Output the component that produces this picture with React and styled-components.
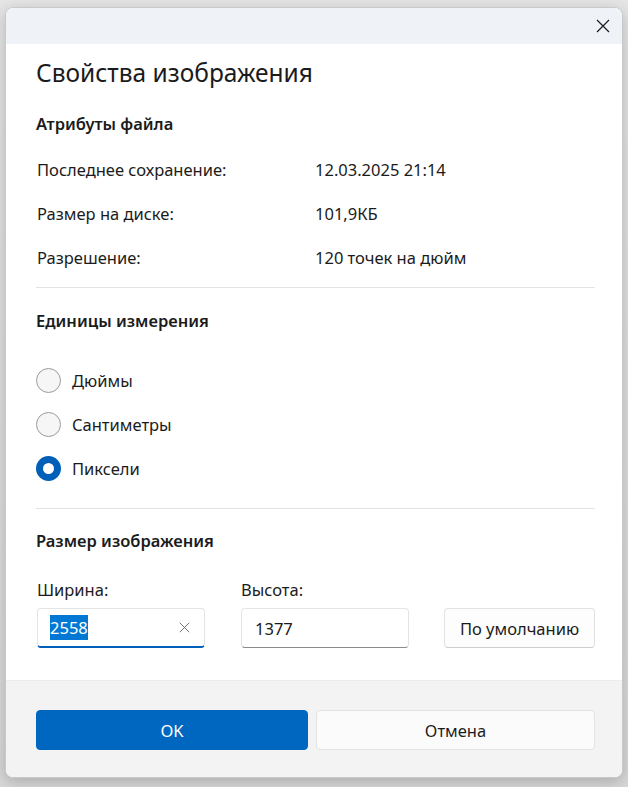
import React from "react";
import styled, { createGlobalStyle } from "styled-components";

const Global = createGlobalStyle`
  html, body { margin: 0; padding: 0; }
  body {
    background: linear-gradient(#e6e6e6, #d9d9d9);
    font-family: "Noto Sans", "Open Sans", sans-serif;
    color: #1b1b1b;
    width: 628px;
    height: 787px;
    overflow: hidden;
  }
`;

const Dialog = styled.div`
  margin: 7px 0 0 5px;
  width: 618px;
  height: 771px;
  box-sizing: border-box;
  border: 1px solid #c9c9c9;
  border-radius: 8px;
  overflow: hidden;
  display: flex;
  flex-direction: column;
  box-shadow: 0 4px 16px rgba(0,0,0,0.22);
  background: #fff;
`;

const TitleBar = styled.div`
  height: 36px;
  background: #eff2f6;
  display: flex;
  justify-content: flex-end;
  align-items: center;
  padding-right: 11px;
`;

const CloseBtn = styled.div`
  width: 16px;
  height: 16px;
  display: flex;
  align-items: center;
  justify-content: center;
`;

const Body = styled.div`
  flex: 1;
  padding: 11px 27px 0 30px;
  display: flex;
  flex-direction: column;
`;

const Title = styled.h1`
  margin: 0;
  font-size: 24.5px;
  font-weight: 400;
  line-height: 36px;
  height: 36px;
`;

const SectionHeading = styled.h2`
  margin: ${p => p.$mt}px 0 0 0;
  font-size: 16.5px;
  font-weight: 600;
  line-height: 24px;
  height: 24px;
`;

const InfoRows = styled.div`
  margin-top: 11px;
  display: flex;
  flex-direction: column;
`;

const InfoRow = styled.div`
  height: 44px;
  display: grid;
  grid-template-columns: 278px 1fr;
  align-items: center;
  font-size: 16.5px;
  padding-left: 1px;
`;

const Divider = styled.div`
  height: 1px;
  background: #e3e3e3;
  margin-top: ${p => p.$mt}px;
`;

const RadioGroup = styled.div`
  margin-top: 25px;
  display: flex;
  flex-direction: column;
`;

const RadioRow = styled.label`
  height: 44px;
  display: flex;
  align-items: center;
  gap: 11px;
  font-size: 16.5px;
`;

const RadioCircle = styled.span`
  width: 25px;
  height: 25px;
  box-sizing: border-box;
  border-radius: 50%;
  flex: none;
  background: ${p => (p.$checked ? "#fff" : "#f6f6f6")};
  border: ${p => (p.$checked ? "7px solid #005fb8" : "1px solid #9b9b9b")};
`;

const FieldRow = styled.div`
  margin-top: 25px;
  display: flex;
  align-items: flex-end;
`;

const Field = styled.div`
  display: flex;
  flex-direction: column;
  width: 168px;
  margin-left: ${p => p.$ml || 0}px;
`;

const FieldLabel = styled.div`
  font-size: 16.5px;
  line-height: 24px;
  height: 24px;
  margin-bottom: 6px;
`;

const Input = styled.div`
  height: 40px;
  box-sizing: border-box;
  border: 1px solid #e4e4e4;
  border-bottom: ${p => (p.$focused ? "2px solid #005fb8" : "1px solid #8a8a8a")};
  border-radius: 4px;
  background: #fff;
  display: flex;
  align-items: center;
  padding: 0 14px 0 13px;
  font-size: 16.5px;
`;

const Selected = styled.span`
  background: #0078d4;
  color: #fff;
  padding: 1px 0;
  margin-left: -1px;
`;

const InputText = styled.span`
  flex: 1;
`;

const DefaultBtn = styled.button`
  margin-left: 35px;
  width: 151px;
  height: 40px;
  box-sizing: border-box;
  border: 1px solid #e2e2e2;
  border-bottom-color: #cfcfcf;
  border-radius: 4px;
  background: #fdfdfd;
  font-family: inherit;
  font-size: 16.5px;
  color: #1b1b1b;
  padding: 0;
`;

const Footer = styled.div`
  height: 97px;
  background: #f3f3f3;
  border-top: 1px solid #ececec;
  box-sizing: border-box;
  padding: 29px 27px 0 30px;
  display: grid;
  grid-template-columns: 272px 1fr;
  grid-template-rows: 40px;
  column-gap: 8px;
`;

const FooterBtn = styled.button`
  height: 40px;
  border-radius: 4px;
  font-family: inherit;
  font-size: 16.5px;
  padding: 0;
  box-sizing: border-box;
  background: ${p => (p.$primary ? "#0067c0" : "#fbfbfb")};
  color: ${p => (p.$primary ? "#fff" : "#1b1b1b")};
  border: 1px solid ${p => (p.$primary ? "#0067c0" : "#e3e3e3")};
`;

const XIcon = ({ size = 14, color = "#1b1b1b", w = 1.2 }) => (
  <svg width={size} height={size} viewBox="0 0 14 14">
    <path d="M1 1 L13 13 M13 1 L1 13" stroke={color} strokeWidth={w} fill="none" />
  </svg>
);

export default function App() {
  return (
    <>
      <Global />
      <Dialog>
        <TitleBar>
          <CloseBtn><XIcon size={14} /></CloseBtn>
        </TitleBar>
        <Body>
          <Title>Свойства изображения</Title>
          <SectionHeading $mt={21}>Атрибуты файла</SectionHeading>
          <InfoRows>
            <InfoRow><span>Последнее сохранение:</span><span>12.03.2025 21:14</span></InfoRow>
            <InfoRow><span>Размер на диске:</span><span>101,9КБ</span></InfoRow>
            <InfoRow><span>Разрешение:</span><span>120 точек на дюйм</span></InfoRow>
          </InfoRows>
          <Divider $mt={8} />
          <SectionHeading $mt={21}>Единицы измерения</SectionHeading>
          <RadioGroup>
            <RadioRow><RadioCircle />Дюймы</RadioRow>
            <RadioRow><RadioCircle />Сантиметры</RadioRow>
            <RadioRow><RadioCircle $checked />Пиксели</RadioRow>
          </RadioGroup>
          <Divider $mt={18} />
          <SectionHeading $mt={20}>Размер изображения</SectionHeading>
          <FieldRow>
            <Field $ml={1}>
              <FieldLabel>Ширина:</FieldLabel>
              <Input $focused>
                <InputText><Selected>2558</Selected></InputText>
                <XIcon size={11} color="#5d5d5d" w={1.1} />
              </Input>
            </Field>
            <Field $ml={36}>
              <FieldLabel>Высота:</FieldLabel>
              <Input><InputText>1377</InputText></Input>
            </Field>
            <DefaultBtn>По умолчанию</DefaultBtn>
          </FieldRow>
        </Body>
        <Footer>
          <FooterBtn $primary>OK</FooterBtn>
          <FooterBtn>Отмена</FooterBtn>
        </Footer>
      </Dialog>
    </>
  );
}
